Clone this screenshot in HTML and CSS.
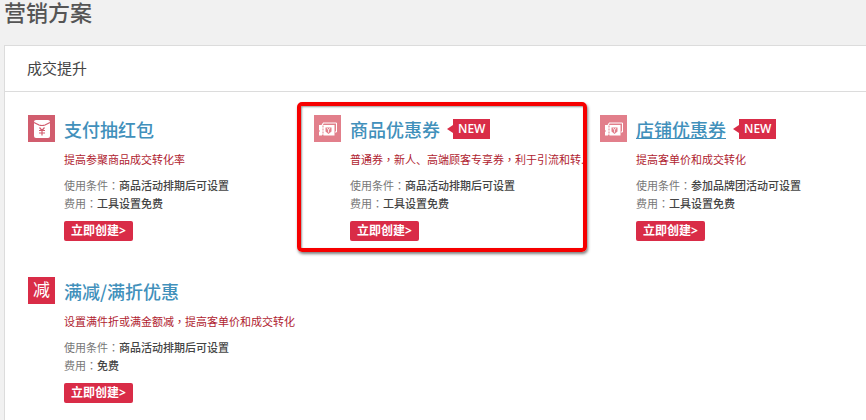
FILE: index.html
```html
<!DOCTYPE html>
<html lang="zh-CN">
<head>
<meta charset="utf-8">
<title>营销方案</title>
<link rel="stylesheet" href="styles.css">
</head>
<body>
<svg class="defs" aria-hidden="true">
  <symbol id="coupon" viewBox="0 0 27 27">
    <path d="M9 9V8h13.500v9H21" fill="none" stroke="#fff" stroke-width="1"/>
    <path d="M5 10h2.500l1-1.500 1 1.500h11v10.500H9.500l-.8-1-.9 1H5v-3.500l1-1-1-1v-3z" fill="#fff"/>
    <path d="M9 10.500v10" stroke="#e27f8b" stroke-width="1" stroke-dasharray="2 1"/>
    <path d="M11.500 12.500h6v4l-3 2.500-3-2.500z" fill="#e27f8b"/>
    <path d="M13 13l1.500 2 1.500-2M14.500 15v2.500" fill="none" stroke="#fff" stroke-width=".8"/>
  </symbol>
</svg>
<h1 class="page-title">营销方案</h1>
<main class="panel">
  <h2 class="panel-title">成交提升</h2>
  <div class="tools">
    <article class="tool">
      <svg class="icon icon-packet" viewBox="0 0 27 27" aria-hidden="true">
        <rect x="6" y="5" width="16" height="18" rx="2" fill="#fff"/>
        <path d="M6 7.500l5 2.500q3 1 6 0l5-2.500" fill="none" stroke="#d15d6e" stroke-width="1.200"/>
        <path d="M11.500 12.500l2.500 3 2.500-3M11 15.500h6M11 18h6M14 15.500v5" fill="none" stroke="#d15d6e" stroke-width="1.200"/>
      </svg>
      <div class="body">
        <h3 class="name"><a href="#">支付抽红包</a></h3>
        <p class="desc">提高参聚商品成交转化率</p>
        <dl class="facts">
          <div><dt>使用条件<span lang="zh-TW">：</span></dt><dd>商品活动排期后可设置</dd></div>
          <div><dt>费用<span lang="zh-TW">：</span></dt><dd>工具设置免费</dd></div>
        </dl>
        <button class="create" type="button">立即创建&gt;</button>
      </div>
    </article>
    <article class="tool highlighted">
      <svg class="icon icon-coupon" aria-hidden="true"><use href="#coupon"/></svg>
      <div class="body">
        <h3 class="name"><a href="#">商品优惠券</a><span class="new">NEW</span></h3>
        <p class="desc">普通券<span lang="zh-TW">，</span>新人、高端顾客专享券<span lang="zh-TW">，</span>利于引流和转..</p>
        <dl class="facts">
          <div><dt>使用条件<span lang="zh-TW">：</span></dt><dd>商品活动排期后可设置</dd></div>
          <div><dt>费用<span lang="zh-TW">：</span></dt><dd>工具设置免费</dd></div>
        </dl>
        <button class="create" type="button">立即创建&gt;</button>
      </div>
    </article>
    <article class="tool">
      <svg class="icon icon-coupon" aria-hidden="true"><use href="#coupon"/></svg>
      <div class="body">
        <h3 class="name"><a class="hovered" href="#">店铺优惠券</a><span class="new">NEW</span></h3>
        <p class="desc">提高客单价和成交转化</p>
        <dl class="facts">
          <div><dt>使用条件<span lang="zh-TW">：</span></dt><dd>参加品牌团活动可设置</dd></div>
          <div><dt>费用<span lang="zh-TW">：</span></dt><dd>工具设置免费</dd></div>
        </dl>
        <button class="create" type="button">立即创建&gt;</button>
      </div>
    </article>
    <article class="tool">
      <span class="icon icon-text">减</span>
      <div class="body">
        <h3 class="name"><a href="#">满减/满折优惠</a></h3>
        <p class="desc">设置满件折或满金额减<span lang="zh-TW">，</span>提高客单价和成交转化</p>
        <dl class="facts">
          <div><dt>使用条件<span lang="zh-TW">：</span></dt><dd>商品活动排期后可设置</dd></div>
          <div><dt>费用<span lang="zh-TW">：</span></dt><dd>免费</dd></div>
        </dl>
        <button class="create" type="button">立即创建&gt;</button>
      </div>
    </article>
  </div>
</main>
</body>
</html>
```
FILE: styles.css
```css
* {
  box-sizing: border-box;
}

body {
  margin: 0;
  min-height: 100vh;
  display: flex;
  flex-direction: column;
  overflow: hidden;
  background: #f1f1f1;
  color: #444;
  font-family: "Open Sans", "Noto Sans CJK SC", sans-serif;
  font-size: 11px;
  line-height: 18px;
}

h1, h2, h3, p, dl, dd {
  margin: 0;
}

[lang="zh-TW"] {
  font-family: "Noto Sans CJK TC", sans-serif;
  line-height: 0;
}

.defs {
  position: absolute;
  width: 0;
  height: 0;
}

.page-title {
  padding: 0 4px 22px;
  color: #555;
  font-family: "Noto Sans CJK SC", sans-serif;
  font-size: 22px;
  font-weight: 500;
  line-height: 23px;
}

.panel {
  flex: 1;
  margin-left: 4px;
  border: solid #dcdcdc;
  border-width: 1px 0 0 1px;
  background: #fff;
}

.panel-title {
  padding: 0 22px;
  border-bottom: 1px solid #dcdcdc;
  color: #444;
  font-size: 15px;
  font-weight: 400;
  line-height: 45px;
}

.tools {
  display: grid;
  grid-template-columns: repeat(3, minmax(286px, 1fr));
  row-gap: 36px;
  padding: 23px 0 0 23px;
}

.tool {
  position: relative;
  display: flex;
  align-items: flex-start;
  gap: 9px;
}

.highlighted::after {
  content: "";
  position: absolute;
  inset: -13px 13px -11px -17px;
  border: 4px solid #f60000;
  border-radius: 5px;
  box-shadow: 1px 2px 3px rgba(0, 0, 0, 0.5), inset 1px 1px 2px rgba(0, 0, 0, 0.4);
  pointer-events: none;
}

.icon {
  flex: none;
  width: 27px;
  height: 27px;
}

.icon-packet {
  background: #d15d6e;
}

.icon-coupon {
  background: #e27f8b;
}

.icon-text {
  background: #d92c47;
  color: #fff;
  font-size: 17px;
  line-height: 26px;
  text-align: center;
}

.name {
  display: flex;
  align-items: center;
  gap: 13px;
  font-family: "Noto Sans CJK SC", sans-serif;
  font-size: 18px;
  font-weight: 500;
  line-height: 28px;
}

.name a {
  color: #4190bb;
  text-decoration: none;
}

.name .hovered,
.name a:hover {
  text-decoration: underline;
}

.new {
  position: relative;
  padding: 0 5px;
  background: #d92c47;
  color: #fff;
  font-family: "Open Sans", sans-serif;
  font-size: 12px;
  font-weight: 600;
  line-height: 20px;
}

.new::before {
  content: "";
  position: absolute;
  top: 6px;
  right: 100%;
  border: solid transparent;
  border-width: 4px 6px 4px 0;
  border-right-color: #d92c47;
}

.desc {
  margin: 8px 0;
  color: #b01c30;
  font-weight: 400;
  white-space: nowrap;
}

.facts > div {
  display: flex;
}

.facts dt {
  color: #777;
}

.facts dd {
  color: #444;
  font-weight: 500;
}

.create {
  display: block;
  margin-top: 8px;
  padding: 0 7px;
  border: 0;
  border-radius: 2px;
  background: #d92c47;
  color: #fff;
  font: 700 12px/20px "Open Sans", "Noto Sans CJK SC", sans-serif;
}
```
